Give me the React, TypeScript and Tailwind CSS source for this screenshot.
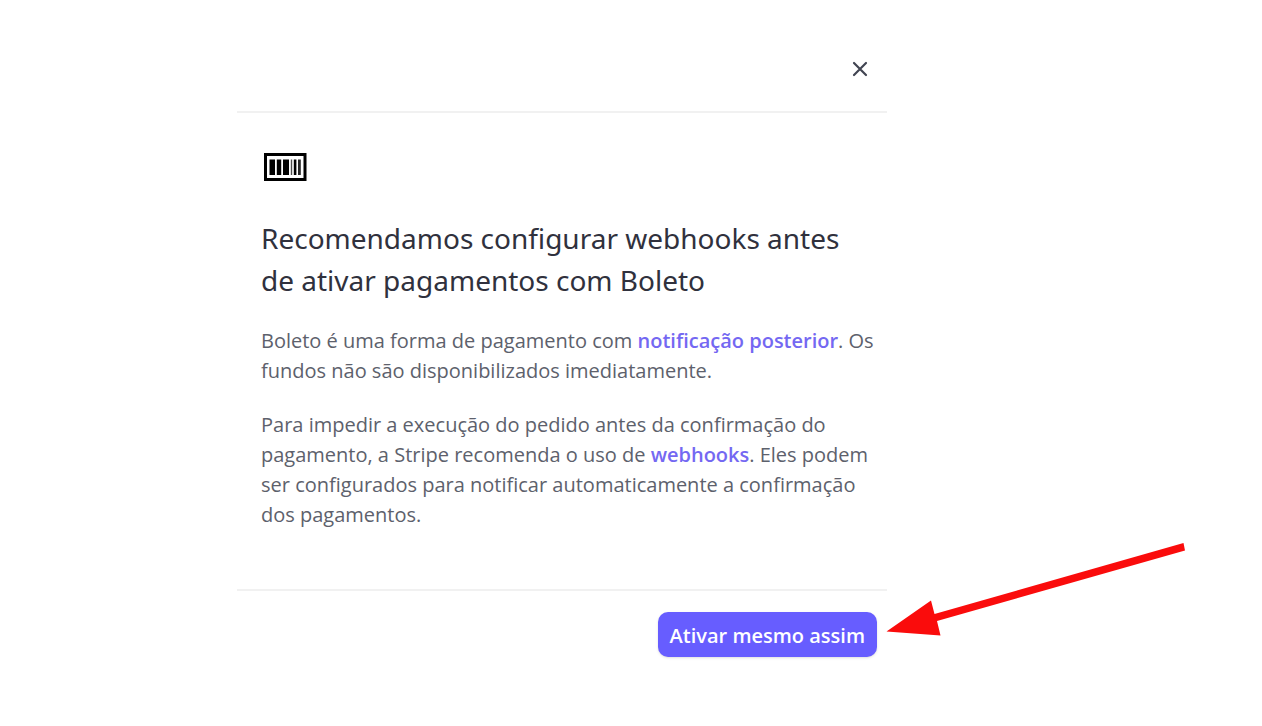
import { useState } from 'react'

const DOCS_URL = '#'

function CloseIcon() {
  return (
    <svg viewBox="0 0 16 16" className="size-4" fill="none" stroke="#414552" strokeWidth="2.2" strokeLinecap="round" aria-hidden="true">
      <path d="M2 2l12 12M14 2L2 14" />
    </svg>
  )
}

function BoletoIcon() {
  return (
    <svg viewBox="0 0 48 28" className="w-12 h-7" role="img" aria-label="Boleto">
      <rect x="4.5" y="1.5" width="39.5" height="25" fill="#fff" stroke="#000" strokeWidth="3" />
      <rect x="8.5" y="6.5" width="5.5" height="15.5" />
      <rect x="15.8" y="6.5" width="4.4" height="15.5" />
      <rect x="22" y="6.5" width="6" height="15.5" />
      <rect x="29.8" y="6.5" width="1.4" height="15.5" opacity="0.7" />
      <rect x="32.8" y="6.5" width="2.6" height="15.5" />
      <rect x="37" y="6.5" width="2.8" height="15.5" opacity="0.85" />
    </svg>
  )
}

function Arrow() {
  return (
    <svg viewBox="0 0 300 94" className="absolute left-full top-full ml-2 -mt-[115px] w-[300px] h-[94px] max-w-none pointer-events-none" aria-hidden="true">
      <path d="M298.5 1L49.5 72L46 58.5L1.5 89.5L55.5 93.5L52 79L300 8.5Z" fill="#fa0c0c" />
    </svg>
  )
}

export default function App() {
  const [open, setOpen] = useState(true)

  return (
    <div className="min-h-screen overflow-hidden bg-white pt-[23px] pl-[237px] font-['Open_Sans','Noto_Sans',sans-serif]">
      {open && (
        <section role="dialog" aria-labelledby="dialog-title" className="max-w-[650px]">
          <header className="flex justify-end border-b-2 border-[#f1f1f1] pt-8 pr-[13px] pb-7">
            <button type="button" aria-label="Fechar" onClick={() => setOpen(false)} className="flex size-7 items-center justify-center">
              <CloseIcon />
            </button>
          </header>

          <div className="pt-10 pr-2.5 pb-[59px] pl-6">
            <BoletoIcon />
            <h1 id="dialog-title" className="mt-9 font-['Noto_Sans',sans-serif] text-[28px] leading-[42px] text-[#30313d]">
              Recomendamos configurar webhooks antes de ativar pagamentos com Boleto
            </h1>
            <div className="mt-[25px] flex flex-col gap-6 text-[20px] leading-[30px] text-[#5d616c]">
              <p>
                Boleto é uma forma de pagamento com{' '}
                <a href={DOCS_URL} className="font-semibold text-[#7468f2]">notificação posterior</a>. Os fundos não são
                disponibilizados imediatamente.
              </p>
              <p>
                Para impedir a execução do pedido antes da confirmação do pagamento, a Stripe recomenda o uso de{' '}
                <a href={DOCS_URL} className="font-semibold text-[#7468f2]">webhooks</a>. Eles podem ser configurados
                para notificar automaticamente a confirmação dos pagamentos.
              </p>
            </div>
          </div>

          <footer className="flex justify-end border-t-2 border-[#f1f1f1] pt-[21px] pr-2.5">
            <div className="relative">
              <button
                type="button"
                onClick={() => setOpen(false)}
                className="h-[45px] rounded-[10px] bg-[#675dff] px-3 pt-0.5 text-[20px] font-semibold text-white shadow-sm"
              >
                Ativar mesmo assim
              </button>
              <Arrow />
            </div>
          </footer>
        </section>
      )}
    </div>
  )
}
